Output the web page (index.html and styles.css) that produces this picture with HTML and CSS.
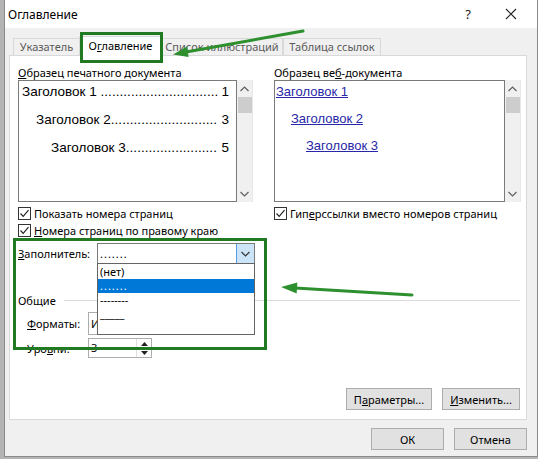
FILE: index.html
```html
<!DOCTYPE html>
<html lang="ru">
<head>
<meta charset="utf-8">
<title>Оглавление</title>
<link rel="stylesheet" href="styles.css">
</head>
<body>
<div class="page">
  <div class="window">
    <div class="titlebar">
      <span class="title">Оглавление</span>
      <span class="help">?</span>
      <span class="close">
        <svg width="12" height="12" viewBox="0 0 12 12"><path d="M1 1L11 11M11 1L1 11" stroke="#222" stroke-width="1.1" fill="none"/></svg>
      </span>
    </div>

    <div class="tabs">
      <div class="tab t1">Указатель</div>
      <div class="tab t2 active">О<u>г</u>лавление</div>
      <div class="tab t3">Список иллюстраций</div>
      <div class="tab t4">Таблица ссылок</div>
    </div>

    <div class="panel">
      <div class="previews">
        <div class="col">
          <div class="label"><u>О</u>бразец печатного документа</div>
          <div class="preview-wrap">
            <div class="preview print">
              <div class="toc-line"><span class="toc-title">Заголовок 1&nbsp;</span><span class="leader">...............................</span><span class="toc-num">&nbsp;1</span></div>
              <div class="toc-line lvl2"><span class="toc-title">Заголовок 2</span><span class="leader">............................</span><span class="toc-num">&nbsp;3</span></div>
              <div class="toc-line lvl3"><span class="toc-title">Заголовок 3</span><span class="leader">........................</span><span class="toc-num">&nbsp;5</span></div>
            </div>
            <div class="vscroll">
              <div class="sbtn"><svg width="9" height="6" viewBox="0 0 9 6"><path d="M0.5 5L4.5 1L8.5 5" stroke="#606060" fill="none" stroke-width="1.2"/></svg></div>
              <div class="thumb"></div>
              <div class="track"></div>
              <div class="sbtn"><svg width="9" height="6" viewBox="0 0 9 6"><path d="M0.5 1L4.5 5L8.5 1" stroke="#606060" fill="none" stroke-width="1.2"/></svg></div>
            </div>
          </div>
          <div class="check">
            <span class="box"><svg width="11" height="11" viewBox="0 0 11 11"><path d="M1.5 5.5L4.2 8.3L9.5 2.2" stroke="#222" fill="none" stroke-width="1.2"/></svg></span>
            <span>Показать номера страниц</span>
          </div>
          <div class="check">
            <span class="box"><svg width="11" height="11" viewBox="0 0 11 11"><path d="M1.5 5.5L4.2 8.3L9.5 2.2" stroke="#222" fill="none" stroke-width="1.2"/></svg></span>
            <span><u>Н</u>омера страниц по правому краю</span>
          </div>
        </div>

        <div class="col">
          <div class="label">Образец ве<u>б</u>-документа</div>
          <div class="preview-wrap">
            <div class="preview web">
              <div class="web-line"><span class="link">Заголовок 1</span></div>
              <div class="web-line lvl2"><span class="link">Заголовок 2</span></div>
              <div class="web-line lvl3"><span class="link">Заголовок 3</span></div>
            </div>
            <div class="vscroll">
              <div class="sbtn"><svg width="9" height="6" viewBox="0 0 9 6"><path d="M0.5 5L4.5 1L8.5 5" stroke="#606060" fill="none" stroke-width="1.2"/></svg></div>
              <div class="thumb"></div>
              <div class="track"></div>
              <div class="sbtn"><svg width="9" height="6" viewBox="0 0 9 6"><path d="M0.5 1L4.5 5L8.5 1" stroke="#606060" fill="none" stroke-width="1.2"/></svg></div>
            </div>
          </div>
          <div class="check">
            <span class="box"><svg width="11" height="11" viewBox="0 0 11 11"><path d="M1.5 5.5L4.2 8.3L9.5 2.2" stroke="#222" fill="none" stroke-width="1.2"/></svg></span>
            <span>Гип<u>е</u>рссылки вместо номеров страниц</span>
          </div>
        </div>
      </div>

      <div class="fill-row">
        <span class="fill-label"><u>З</u>аполнитель:</span>
        <div class="combo open">
          <span class="combo-value dots">.......</span>
          <span class="combo-btn"><svg width="9" height="6" viewBox="0 0 9 6"><path d="M0.5 1L4.5 5L8.5 1" stroke="#333" fill="none" stroke-width="1.1"/></svg></span>
          <div class="dropdown">
            <div class="opt">(нет)</div>
            <div class="opt sel dots">.......</div>
            <div class="opt">--------</div>
            <div class="opt">_____</div>
          </div>
        </div>
      </div>

      <div class="group-head">
        <span>Общие</span>
        <span class="sep"></span>
      </div>

      <div class="field-row">
        <span class="field-label"><u>Ф</u>орматы:</span>
        <div class="combo small"><span class="combo-value">И</span></div>
      </div>

      <div class="field-row levels">
        <span class="field-label">Уро<u>в</u>ни:</span>
        <div class="spin">
          <span class="spin-value">3</span>
          <span class="spin-btns">
            <span class="sp"><svg width="7" height="4" viewBox="0 0 7 4"><path d="M0 4L3.5 0L7 4Z" fill="#222"/></svg></span>
            <span class="sp"><svg width="7" height="4" viewBox="0 0 7 4"><path d="M0 0L3.5 4L7 0Z" fill="#222"/></svg></span>
          </span>
        </div>
      </div>

      <div class="panel-buttons">
        <button class="btn w-params">П<u>а</u>раметры...</button>
        <button class="btn w-edit"><u>И</u>зменить...</button>
      </div>
    </div>

    <div class="footer">
      <button class="btn w-ok">ОК</button>
      <button class="btn w-ok">Отмена</button>
    </div>
  </div>

  <svg class="annot" width="538" height="459" viewBox="0 0 538 459">
    <rect x="81.5" y="33.5" width="80" height="28" fill="none" stroke="#217a21" stroke-width="3"/>
    <rect x="14.5" y="239.5" width="251" height="109" fill="none" stroke="#217a21" stroke-width="3"/>
    <line x1="303" y1="31" x2="186" y2="52" stroke="#2e8f2e" stroke-width="3" stroke-linecap="round"/>
    <polygon points="173,54.5 188.6,57 187,46.5" fill="#2e8f2e"/>
    <line x1="412" y1="295" x2="295" y2="288" stroke="#2e8f2e" stroke-width="3" stroke-linecap="round"/>
    <polygon points="281,287 297.3,282.5 296.7,293.5" fill="#2e8f2e"/>
  </svg>
</div>
</body>
</html>
```

FILE: styles.css
```css
* { box-sizing: border-box; }

body {
  margin: 0;
  background: #b4b4b4;
  font-family: "Noto Sans", "Open Sans", sans-serif;
  font-size: 11px;
  color: #000;
}

.page {
  position: relative;
  width: 538px;
  height: 459px;
  overflow: hidden;
}

.window {
  margin-left: 4px;
  width: 534px;
  height: 457px;
  background: #f0f0f0;
  border: 1px solid #8a8a8a;
  border-top: none;
  display: flex;
  flex-direction: column;
}

.titlebar {
  height: 28px;
  background: #fff;
  display: flex;
  align-items: center;
  padding-left: 3px;
  font-size: 12px;
}
.title { flex: 1; }
.help {
  width: 46px;
  text-align: center;
  font-size: 13px;
  color: #222;
}
.close {
  width: 40px;
  margin-right: 6px;
  display: flex;
  justify-content: center;
}

.tabs {
  display: flex;
  align-items: flex-end;
  height: 19px;
  margin: 8px 0 0 8px;
}
.tab {
  height: 17px;
  line-height: 15px;
  text-align: center;
  border: 1px solid #d9d9d9;
  border-bottom: none;
  background: #f0f0f0;
  color: #5a5a5a;
  white-space: nowrap;
}
.tab.active {
  height: 20px;
  line-height: 18px;
  background: #fff;
  color: #000;
  position: relative;
  z-index: 1;
  margin-bottom: -1px;
}
.t1 { width: 66px; border-right: none; }
.t2 { width: 83px; }
.t3 { width: 121px; border-left: none; }
.t4 { width: 98px; border-left: 1px solid #d9d9d9; }

.panel {
  margin-left: 4px;
  width: 518px;
  height: 365px;
  background: #fff;
  border: 1px solid #d9d9d9;
  padding: 9px 6px 9px 8px;
  display: flex;
  flex-direction: column;
}

.previews {
  display: grid;
  grid-template-columns: 235px 247px;
  column-gap: 21px;
}

.label {
  height: 15px;
  line-height: 15px;
  white-space: nowrap;
}

.preview-wrap {
  display: flex;
  height: 122px;
}
.preview {
  flex: 1;
  border: 1px solid #7a7a7a;
  background: #fff;
  display: flex;
  flex-direction: column;
  overflow: hidden;
  font-family: "Liberation Sans", "Noto Sans", sans-serif;
  font-size: 13.5px;
}
.preview.print { gap: 6px; padding: 0 7px 0 3px; }
.preview.web { gap: 5px; padding: 0 4px 0 1px; font-size: 13px; }

.toc-line {
  display: flex;
  height: 22px;
  line-height: 22px;
  white-space: nowrap;
}
.toc-line.lvl2 { padding-left: 14px; }
.toc-line.lvl3 { padding-left: 29px; }
.toc-title { flex: none; }
.leader { flex: 1; min-width: 0; letter-spacing: 0.05px; }
.toc-num { flex: none; }

.web-line {
  height: 22px;
  line-height: 22px;
  white-space: nowrap;
}
.web-line.lvl2 { padding-left: 15px; }
.web-line.lvl3 { padding-left: 30px; }
.link {
  color: #2727a8;
  text-decoration: underline;
}

.vscroll {
  width: 16px;
  background: #f0f0f0;
  border-right: 1px solid #e8e8e8;
  display: flex;
  flex-direction: column;
  align-items: center;
}
.sbtn {
  height: 17px;
  width: 100%;
  display: flex;
  align-items: center;
  justify-content: center;
}
.thumb {
  width: 14px;
  height: 16px;
  background: #cdcdcd;
}
.track { flex: 1; }

.check {
  display: flex;
  align-items: center;
  gap: 3px;
  height: 17px;
  white-space: nowrap;
}
.previews .preview-wrap + .check { margin-top: 3px; }
.box {
  width: 13px;
  height: 13px;
  border: 1px solid #333;
  background: #fff;
  display: flex;
  align-items: center;
  justify-content: center;
}

.fill-row {
  display: flex;
  align-items: center;
  margin-top: 4px;
  height: 21px;
}
.fill-label { width: 79px; }

.combo {
  position: relative;
  display: flex;
  align-items: center;
  height: 21px;
  border: 1px solid #7a7a7a;
  background: #fff;
}
.combo.open { width: 158px; }
.combo-value {
  flex: 1;
  padding-left: 2px;
  white-space: nowrap;
  overflow: hidden;
}
.dots { letter-spacing: 1px; }
.combo-btn {
  width: 18px;
  height: 19px;
  background: #cce4f7;
  border-left: 1px solid #569de5;
  display: flex;
  align-items: center;
  justify-content: center;
}
.dropdown {
  position: absolute;
  top: 19px;
  left: -1px;
  width: 158px;
  height: 72px;
  background: #fff;
  border: 1px solid #646464;
  padding-top: 1px;
  z-index: 5;
}
.opt {
  height: 14px;
  line-height: 14px;
  padding-left: 2px;
  white-space: nowrap;
}
.opt.sel {
  background: #0078d7;
  color: #fff;
}

.group-head {
  display: flex;
  align-items: center;
  gap: 8px;
  height: 16px;
  margin-top: 28px;
}
.sep {
  flex: 1;
  height: 1px;
  background: #dcdcdc;
}

.field-row {
  display: flex;
  align-items: center;
  margin-top: 4px;
  padding-left: 9px;
  height: 23px;
}
.field-row.levels { margin-top: 3px; height: 20px; }
.field-label { width: 61px; }
.combo.small { width: 150px; height: 23px; border-color: #adadad; }

.spin {
  width: 64px;
  height: 20px;
  border: 1px solid #adadad;
  display: flex;
  background: #fff;
}
.spin-value { flex: 1; padding-left: 2px; line-height: 18px; }
.spin-btns {
  width: 15px;
  display: flex;
  flex-direction: column;
  border-left: 1px solid #e0e0e0;
}
.sp {
  flex: 1;
  display: flex;
  align-items: center;
  justify-content: center;
}

.panel-buttons {
  margin-top: auto;
  display: flex;
  justify-content: flex-end;
  gap: 10px;
}

.btn {
  height: 22px;
  background: #e1e1e1;
  border: 1px solid #adadad;
  font-family: "Noto Sans", "Open Sans", sans-serif;
  font-size: 11px;
  color: #000;
  padding: 0;
}
.w-params { width: 86px; }
.w-edit { width: 78px; }
.w-ok { width: 73px; }

.footer {
  display: flex;
  justify-content: flex-end;
  gap: 10px;
  padding: 8px 10px 0 0;
}

.annot {
  position: absolute;
  left: 0;
  top: 0;
  pointer-events: none;
  z-index: 10;
}
```
